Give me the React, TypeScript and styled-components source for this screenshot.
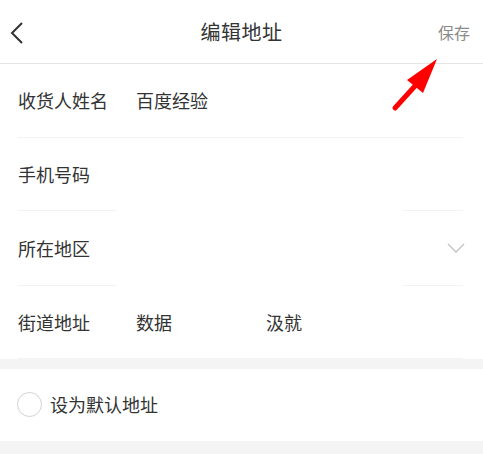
import React from "react";
import styled, { createGlobalStyle } from "styled-components";

const GlobalStyle = createGlobalStyle`
	html, body {
		margin: 0;
		padding: 0;
		background: #f4f4f4;
	}
	body {
		font-family: "Noto Sans CJK SC", "Noto Sans", sans-serif;
		color: #333;
	}
`;

const Page = styled.div`
	position: relative;
	width: 483px;
	min-height: 454px;
	background: #f4f4f4;
	overflow: hidden;
`;

const Header = styled.header`
	height: 63px;
	display: grid;
	grid-template-columns: 60px 1fr 60px;
	align-items: center;
	background: #fff;
	border-bottom: 1px solid #e6e6e6;
`;

const BackButton = styled.div`
	display: flex;
	align-items: center;
	padding-left: 10px;
	height: 100%;
`;

const Title = styled.h1`
	margin: 0;
	text-align: center;
	font-size: 20px;
	font-weight: 400;
	color: #333;
	letter-spacing: 0.5px;
`;

const Save = styled.div`
	text-align: right;
	padding-right: 13px;
	font-size: 16px;
	color: #8a8a8a;
`;

const Form = styled.section`
	background: #fff;
	margin-bottom: 10px;
`;

const Row = styled.div<{ $h?: number }>`
	height: ${(p) => p.$h ?? 73}px;
	display: flex;
	align-items: center;
	padding: 0 18px;
	font-size: 18px;
	padding-bottom: 1px;
	box-sizing: border-box;
`;

const Label = styled.span`
	width: 118px;
	flex-shrink: 0;
	color: #333;
`;

const Value = styled.span<{ $width?: number }>`
	width: ${(p) => (p.$width ? `${p.$width}px` : "auto")};
	color: #333;
`;

const Spacer = styled.span`
	flex: 1;
`;

const Divider = styled.div<{ $broken?: boolean }>`
	height: 1px;
	margin: 0 20px 0 18px;
	background: ${(p) =>
		p.$broken
			? "linear-gradient(to right, #f3f3f3 0 98px, #fff 98px 385px, #f3f3f3 385px)"
			: "#f3f3f3"};
`;

const DefaultRow = styled.div`
	height: 72px;
	display: flex;
	align-items: center;
	gap: 8px;
	padding: 0 17px 2px;
	box-sizing: border-box;
	background: #fff;
	font-size: 18px;
	color: #333;
	margin-bottom: 14px;
`;

const Radio = styled.span`
	width: 25px;
	height: 25px;
	border-radius: 50%;
	border: 1.5px solid #d2d2d2;
	box-sizing: border-box;
	flex-shrink: 0;
`;

const Annotation = styled.svg`
	position: absolute;
	left: 390px;
	top: 55px;
	pointer-events: none;
`;

const App: React.FC = () => {
	return (
		<Page>
			<GlobalStyle />
			<Header>
				<BackButton>
					<svg width="16" height="24" viewBox="0 0 16 24">
						<path d="M12 3 L2 13 L12 23" fill="none" stroke="#333" strokeWidth="2" />
					</svg>
				</BackButton>
				<Title>编辑地址</Title>
				<Save>保存</Save>
			</Header>
			<Form>
				<Row>
					<Label>收货人姓名</Label>
					<Value>百度经验</Value>
				</Row>
				<Divider />
				<Row $h={72}>
					<Label>手机号码</Label>
				</Row>
				<Divider $broken />
				<Row $h={74}>
					<Label>所在地区</Label>
					<Spacer />
					<svg width="18" height="10" viewBox="0 0 18 10">
						<path d="M1 1 L9 9 L17 1" fill="none" stroke="#c2c2c2" strokeWidth="1.3" />
					</svg>
				</Row>
				<Divider $broken />
				<Row $h={72}>
					<Label>街道地址</Label>
					<Value $width={130}>数据</Value>
					<Value>汲就</Value>
				</Row>
				<Divider />
			</Form>
			<DefaultRow>
				<Radio />
				<span>设为默认地址</span>
			</DefaultRow>
			<Annotation width="60" height="60" viewBox="0 0 60 60">
				<path d="M5 53 L25 31" stroke="#ff0000" strokeWidth="5" strokeLinecap="round" />
				<polygon points="47,4 17,25 33,38" fill="#ff0000" />
			</Annotation>
		</Page>
	);
};

export default App;
